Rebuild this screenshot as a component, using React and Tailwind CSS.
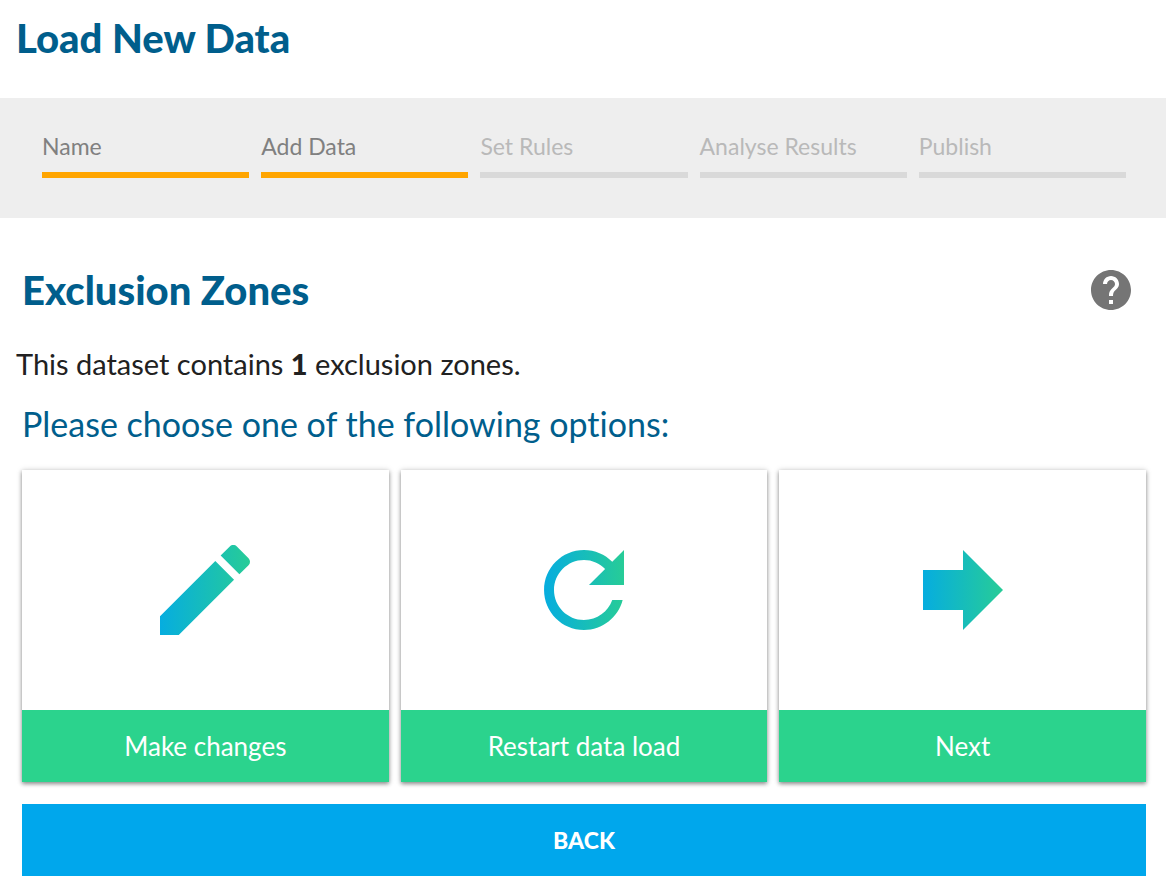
import React from 'react';
import { clsx } from 'clsx';

const STEPS = [
  { label: 'Name', done: true },
  { label: 'Add Data', done: true },
  { label: 'Set Rules', done: false },
  { label: 'Analyse Results', done: false },
  { label: 'Publish', done: false },
];

const OPTIONS = [
  {
    id: 'edit',
    label: 'Make changes',
    path: 'M3 17.25V21h3.75L17.81 9.94l-3.75-3.75L3 17.25zM20.71 7.04c.39-.39.39-1.02 0-1.41l-2.34-2.34c-.39-.39-1.02-.39-1.41 0l-1.83 1.83 3.75 3.75 1.83-1.83z',
  },
  {
    id: 'restart',
    label: 'Restart data load',
    path: 'M17.65 6.35C16.2 4.9 14.21 4 12 4c-4.42 0-7.99 3.58-7.99 8s3.57 8 7.99 8c3.73 0 6.84-2.55 7.73-6h-2.08c-.82 2.33-3.04 4-5.65 4-3.31 0-6-2.69-6-6s2.69-6 6-6c1.66 0 3.14.69 4.22 1.78L13 11h7V4l-2.35 2.35z',
  },
  {
    id: 'next',
    label: 'Next',
    path: 'M12 4l8 8-8 8v-4H4V8h8z',
  },
];

const Stepper = () => (
  <ol className="grid grid-cols-5 gap-3 bg-[#eeeeee] pt-[34px] pr-10 pb-10 pl-[42px]">
    {STEPS.map(({ label, done }) => (
      <li
        key={label}
        className={clsx(
          'border-b-6 pb-3 text-[23px] leading-7 whitespace-nowrap',
          done ? 'border-[#ffa500] text-[#808080]' : 'border-[#d9d9d9] text-[#b9b9b9]',
        )}
      >
        {label}
      </li>
    ))}
  </ol>
);

const OptionCard = ({ id, label, path }) => (
  <button
    type="button"
    className="flex cursor-pointer flex-col bg-white shadow-[0_2px_4px_rgba(0,0,0,0.4),0_0_6px_rgba(0,0,0,0.15)]"
  >
    <span className="flex h-60 w-full items-center justify-center">
      <svg viewBox="0 0 24 24" className="size-[120px]" aria-hidden="true">
        <defs>
          <linearGradient id={`fill-${id}`}>
            <stop offset="0" stopColor="#06addf" />
            <stop offset="1" stopColor="#27cc97" />
          </linearGradient>
        </defs>
        <path d={path} fill={`url(#fill-${id})`} />
      </svg>
    </span>
    <span className="w-full bg-[#2bd38d] py-[18px] text-[26px] leading-9 text-white">{label}</span>
  </button>
);

const App = () => (
  <div className="min-h-screen bg-white font-['Lato',sans-serif] text-[#212121] [font-variant-ligatures:none]">
    <header className="px-4 pt-4 pb-[38px]">
      <h1 className="text-[40px] leading-[44px] font-black text-[#005e8c]">Load New Data</h1>
    </header>

    <Stepper />

    <main className="pt-12 pr-5 pb-5 pl-[22px]">
      <div className="flex h-12 items-center justify-between pr-[11px]">
        <h2 className="text-[40px] leading-[44px] font-black text-[#005e8c]">Exclusion Zones</h2>
        <button type="button" aria-label="Help" className="cursor-pointer text-[#757575]">
          <svg viewBox="0 0 24 24" className="size-12" fill="currentColor" aria-hidden="true">
            <path d="M12 2C6.48 2 2 6.48 2 12s4.48 10 10 10 10-4.48 10-10S17.52 2 12 2zm1 17h-2v-2h2v2zm2.07-7.75l-.9.92C13.45 12.9 13 13.5 13 15h-2v-.5c0-1.1.45-2.1 1.17-2.83l1.24-1.26c.37-.36.59-.86.59-1.41 0-1.1-.9-2-2-2s-2 .9-2 2H8c0-2.21 1.79-4 4-4s4 1.79 4 4c0 .88-.36 1.68-.93 2.25z" />
          </svg>
        </button>
      </div>

      <p className="-ml-1.5 mt-8 text-[29px] leading-9">
        This dataset contains <strong className="font-black">1</strong> exclusion zones.
      </p>

      <h3 className="mt-5 text-[34px] leading-[44px] text-[#005e8c]">
        Please choose one of the following options:
      </h3>

      <div className="mt-6 grid grid-cols-3 gap-3">
        {OPTIONS.map((option) => (
          <OptionCard key={option.id} {...option} />
        ))}
      </div>

      <button
        type="button"
        className="mt-[22px] h-[72px] w-full cursor-pointer bg-[#00a7ec] text-[23px] font-black text-white"
      >
        BACK
      </button>
    </main>
  </div>
);

export default App;
